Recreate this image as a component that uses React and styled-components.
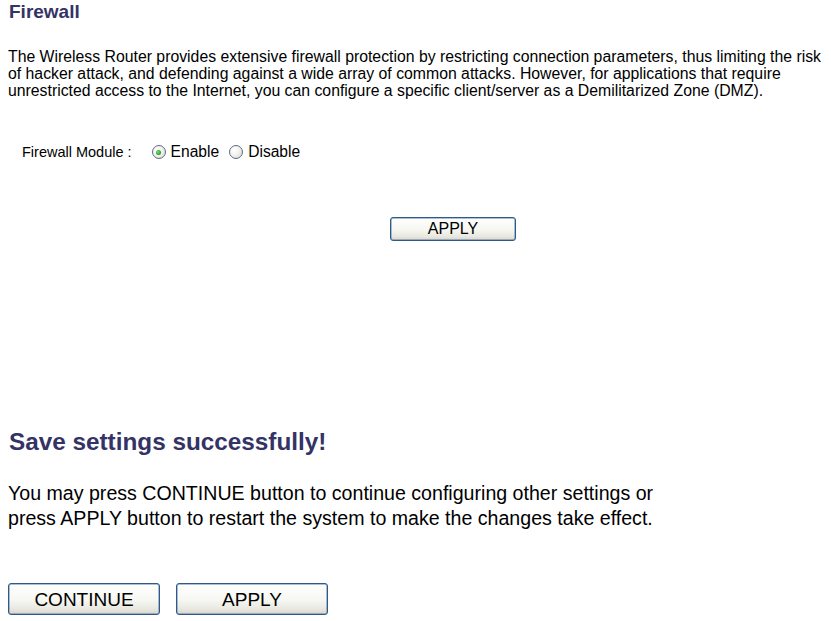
import React from "react";
import styled, { createGlobalStyle } from "styled-components";

const Global = createGlobalStyle`
  html, body { margin: 0; padding: 0; background: #ffffff; }
  body { font-family: "Liberation Sans", Arial, sans-serif; color: #000; }
`;

const Page = styled.div`
  width: 831px;
  box-sizing: border-box;
  padding: 1px 4px 0 8px;
`;

const Section = styled.section`
  display: flex;
  flex-direction: column;
  margin-top: ${(p) => p.$mt || 0}px;
`;

const Title = styled.h1`
  margin: 0 0 0 1px;
  font-size: ${(p) => p.$size}px;
  line-height: ${(p) => p.$lh}px;
  font-weight: bold;
  color: #333366;
`;

const Text = styled.p`
  margin: ${(p) => p.$mt}px 0 0 0;
  font-size: ${(p) => p.$size}px;
  line-height: ${(p) => p.$lh}px;
  color: #000;
`;

const FieldRow = styled.div`
  display: flex;
  align-items: center;
  margin-top: 43px;
  padding-left: 14px;
  height: 20px;
  font-size: 14.5px;
`;

const FieldLabel = styled.span`
  margin-right: 20px;
`;

const RadioLabel = styled.label`
  display: inline-flex;
  align-items: center;
  gap: 5px;
  margin-right: 10px;
  font-size: 15.6px;
`;

const Radio = styled.input.attrs({ type: "radio" })`
  appearance: none;
  -webkit-appearance: none;
  margin: 0;
  width: 14px;
  height: 14px;
  border-radius: 50%;
  border: 1px solid #5b6c84;
  box-sizing: border-box;
  background: radial-gradient(circle at 35% 35%, #ffffff 0%, #f2f2ee 45%, #d4d4cc 100%);
  position: relative;
  &:checked::after {
    content: "";
    position: absolute;
    left: 3.5px;
    top: 3.5px;
    width: 5px;
    height: 5px;
    border-radius: 50%;
    background: radial-gradient(circle at 40% 40%, #7de27d 0%, #26a526 60%, #1b8a1b 100%);
  }
`;

const ButtonBar = styled.div`
  display: flex;
  gap: 16px;
  margin-top: ${(p) => p.$mt}px;
  padding-left: ${(p) => p.$indent}px;
`;

const Button = styled.button`
  width: ${(p) => p.$w}px;
  height: ${(p) => p.$h}px;
  margin: 0;
  padding: 0;
  border: 1px solid #2c5a8c;
  border-radius: 3px;
  box-shadow: inset 0 0 0 0.5px #5a80a8;
  background: linear-gradient(to bottom, #ffffff 0%, #f6f6f2 55%, #e8e6de 85%, #d8d4ca 100%);
  font-family: "Liberation Sans", Arial, sans-serif;
  font-size: ${(p) => p.$fs}px;
  color: #000;
  line-height: 1;
  cursor: pointer;
`;

export default function App() {
  return (
    <>
      <Global />
      <Page>
        <Section>
          <Title $size={19} $lh={22}>Firewall</Title>
          <Text $mt={25} $size={15.8} $lh={17}>
            The Wireless Router provides extensive firewall protection by restricting connection
            parameters, thus limiting the risk of hacker attack, and defending against a wide array
            of common attacks. However, for applications that require unrestricted access to the
            Internet, you can configure a specific client/server as a Demilitarized Zone (DMZ).
          </Text>
          <FieldRow>
            <FieldLabel>Firewall Module :</FieldLabel>
            <RadioLabel>
              <Radio name="fw" defaultChecked />
              Enable
            </RadioLabel>
            <RadioLabel>
              <Radio name="fw" />
              Disable
            </RadioLabel>
          </FieldRow>
          <ButtonBar $mt={55} $indent={382}>
            <Button $w={126} $h={24} $fs={16}>APPLY</Button>
          </ButtonBar>
        </Section>
        <Section $mt={187}>
          <Title $size={24.3} $lh={28}>Save settings successfully!</Title>
          <Text $mt={25} $size={19.6} $lh={25}>
            You may press CONTINUE button to continue configuring other settings or
            <br />
            press APPLY button to restart the system to make the changes take effect.
          </Text>
          <ButtonBar $mt={52} $indent={0}>
            <Button $w={152} $h={32} $fs={19}>CONTINUE</Button>
            <Button $w={152} $h={32} $fs={19}>APPLY</Button>
          </ButtonBar>
        </Section>
      </Page>
    </>
  );
}
